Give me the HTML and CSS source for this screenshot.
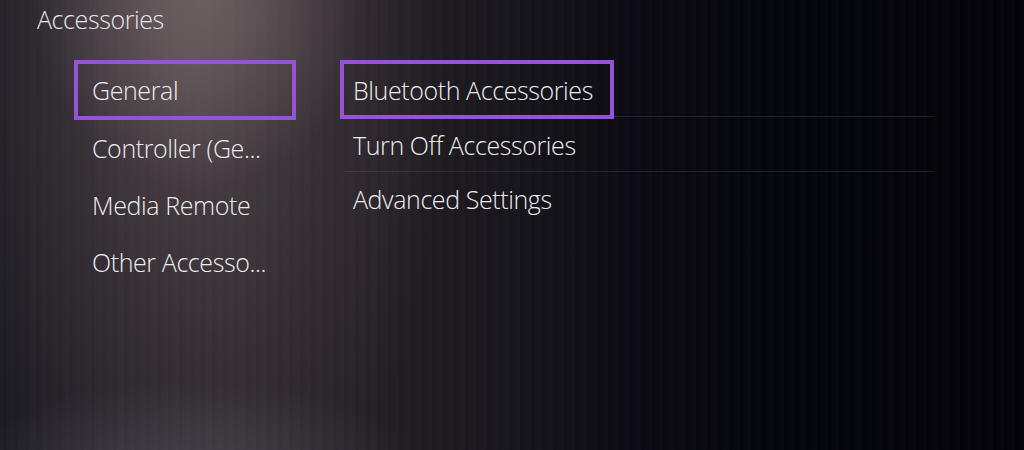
FILE: index.html
```html
<!DOCTYPE html>
<html lang="en">
<head>
<meta charset="utf-8">
<title>Accessories</title>
<link rel="stylesheet" href="styles.css">
</head>
<body>
<div class="screen">
  <h1 class="title">Accessories</h1>
  <div class="columns">
    <ul class="side">
      <li class="side-item focused">General</li>
      <li class="side-item">Controller (Ge...</li>
      <li class="side-item">Media Remote</li>
      <li class="side-item">Other Accesso...</li>
    </ul>
    <ul class="menu">
      <li class="menu-item focused">Bluetooth Accessories</li>
      <li class="menu-item">Turn Off Accessories</li>
      <li class="menu-item">Advanced Settings</li>
    </ul>
  </div>
</div>
</body>
</html>
```
FILE: styles.css
```css
* { box-sizing: border-box; }
html, body { margin: 0; padding: 0; }
body {
  width: 1024px;
  height: 450px;
  overflow: hidden;
  font-family: "Open Sans", "DejaVu Sans", sans-serif;
  font-weight: 300;
  color: #eeecef;
}
.screen {
  width: 1024px;
  height: 450px;
  padding: 3px 0 0 37px;
  background:
    radial-gradient(ellipse 170px 200px at 200px -10px, rgba(140,124,124,0.55), rgba(140,124,124,0) 100%),
    radial-gradient(ellipse 260px 520px at 190px 60px, rgba(92,80,84,0.7), rgba(80,70,76,0.35) 55%, rgba(60,52,58,0) 100%),
    radial-gradient(ellipse 230px 90px at 190px 470px, rgba(100,98,112,0.45), rgba(70,68,80,0) 100%),
    repeating-linear-gradient(90deg, rgba(255,255,255,0.012) 0 3px, rgba(0,0,0,0.02) 3px 7px, rgba(255,255,255,0.008) 7px 11px),
    linear-gradient(90deg, #1a1920 0%, #231f26 10%, #2a252a 22%, #241f25 36%, #17151c 50%, #0b0a12 62%, #05050c 75%, #030309 100%);
}
.title {
  margin: 0;
  font-size: 25px;
  font-weight: 300;
  line-height: 32px;
  letter-spacing: -0.4px;
  color: #e8e6e8;
}
.columns {
  display: flex;
  margin-top: 25px;
}
ul { list-style: none; margin: 0; padding: 0; }
.side {
  width: 222px;
  margin-left: 37px;
  display: flex;
  flex-direction: column;
}
.side-item {
  height: 57px;
  padding-left: 14px;
  display: flex;
  align-items: center;
  font-size: 25px;
  letter-spacing: -0.4px;
  border: 4px solid transparent;
}
.side-item:first-child { height: 60px; }
.side-item:nth-child(2) { margin-top: -1px; }
.side-item.focused { border-color: #9454d4; }
.menu {
  margin-left: 44px;
  width: 593px;
  display: flex;
  flex-direction: column;
}
.menu-item {
  height: 54px;
  display: flex;
  align-items: center;
  padding-left: 8px;
  font-size: 25px;
  letter-spacing: -0.4px;
  border-bottom: 1px solid rgba(120,120,140,0.22);
  margin-left: 5px;
}
.menu-item.focused {
  width: 274px;
  height: 59px;
  margin-left: 0;
  padding-left: 9px;
  border: 4px solid #9454d4;
  position: relative;
}
.menu-item.focused::after {
  content: "";
  position: absolute;
  left: 270px;
  bottom: -2px;
  width: 320px;
  height: 1px;
  background: rgba(120,120,140,0.22);
}
.menu-item:nth-child(2) { height: 53px; }
.menu-item:last-child { border-bottom: none; }
```
